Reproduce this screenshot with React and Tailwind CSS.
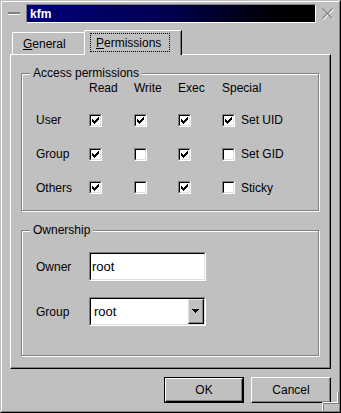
import React from 'react';

const CheckMark = () => (
  <svg width="7" height="7" viewBox="0 0 7 7" shapeRendering="crispEdges">
    <path
      fill="#000"
      d="M6 0h1v1h-1z M5 1h2v1h-2z M0 2h1v1h-1z M4 2h3v1h-3z M0 3h2v1h-2z M3 3h3v1h-3z M0 4h5v1h-5z M1 5h3v1h-3z M2 6h1v1h-1z"
    />
  </svg>
);

const Checkbox = ({ checked }) => (
  <div className="w-[13px] h-[13px] flex border border-t-[#808080] border-l-[#808080] border-r-white border-b-white">
    <div className="flex-1 flex items-center justify-center bg-white border border-t-black border-l-black border-r-[#dfdfdf] border-b-[#dfdfdf]">
      {checked && <CheckMark />}
    </div>
  </div>
);

const rows = [
  { label: 'User', perms: [true, true, true], special: 'Set UID', specialOn: true },
  { label: 'Group', perms: [true, false, true], special: 'Set GID', specialOn: false },
  { label: 'Others', perms: [true, false, true], special: 'Sticky', specialOn: false },
];

const Sunken = ({ children, className = '' }) => (
  <div className={`flex border border-t-[#808080] border-l-[#808080] border-r-white border-b-white ${className}`}>
    <div className="flex-1 flex items-center bg-white border border-t-black border-l-black border-r-[#dfdfdf] border-b-[#dfdfdf]">
      {children}
    </div>
  </div>
);

export default function App() {
  return (
    <div className="w-[341px] h-[413px] bg-[#c0c0c0] text-black text-[12px] leading-[14px] font-['Liberation_Sans',Arial,sans-serif] border border-t-[#c0c0c0] border-l-[#c0c0c0] border-r-black border-b-black">
      <div className="relative h-full flex flex-col border border-t-white border-l-white border-r-[#808080] border-b-[#808080]">
        {/* Title row */}
        <div className="h-[24px] flex items-start pt-[2px]">
          <div className="w-[24px] h-[19px] flex items-center justify-center">
            <div className="w-[12px] h-[3px] border-t-2 border-b border-t-[#808080] border-b-white" />
          </div>
          <div className="w-[290px] h-[19px] flex border border-t-[#808080] border-l-[#808080] border-r-white border-b-white">
            <div className="flex-1 flex items-center pl-[3px] bg-gradient-to-r from-[#00007c] via-[#000050] to-black">
              <span className="text-white font-bold text-[12px]">kfm</span>
            </div>
          </div>
          <div className="flex-1 h-[19px] flex items-center justify-center">
            <svg width="13" height="13" viewBox="0 0 13 13">
              <path d="M1.5 1.5 L11.5 11.5 M11.5 1.5 L1.5 11.5" stroke="#fff" strokeWidth="1.3" transform="translate(0.8 0.8)" />
              <path d="M1.5 1.5 L11.5 11.5 M11.5 1.5 L1.5 11.5" stroke="#808080" strokeWidth="1.3" />
            </svg>
          </div>
        </div>

        {/* Tabs */}
        <div className="h-[29px] -mb-[1px] flex items-start pl-[10px] relative z-10">
          <div className="mt-[6px] w-[72px] h-[22px] flex items-center pl-[10px] border-l border-t border-white rounded-tl-[2px]">
            <span><span className="underline">G</span>eneral</span>
          </div>
          <div className="mt-[4px] w-[98px] h-[25px] bg-[#c0c0c0] flex items-start pt-[2px] pl-[5px] border-l border-t border-r border-t-white border-l-white border-r-black shadow-[inset_-1px_0_0_#808080] rounded-tl-[2px]">
            <div className="w-[80px] h-[19px] flex items-center pl-[5px] border border-dotted border-black">
              <span><span className="underline">P</span>ermissions</span>
            </div>
          </div>
        </div>

        {/* Panel */}
        <div className="ml-[8px] w-[321px] h-[315px] flex flex-col px-[10px] border border-t-white border-l-white border-r-black border-b-black shadow-[inset_-1px_-1px_0_#808080]">
          <fieldset className="mt-[11px] w-[298px] border border-[#808080] shadow-[1px_1px_0_#fff,inset_1px_1px_0_#fff]">
            <legend className="ml-[8px] px-[3px] bg-[#c0c0c0]">Access permissions</legend>
            <div className="pl-[14px] pt-[1px] pb-[6px]">
              <div className="grid grid-cols-[53px_45px_44px_44px_1fr] h-[14px] items-center">
                <span />
                <span>Read</span>
                <span>Write</span>
                <span>Exec</span>
                <span>Special</span>
              </div>
              <div className="mt-[8px]">
                {rows.map((r, i) => (
                  <div
                    key={r.label}
                    className={`grid grid-cols-[53px_45px_44px_44px_1fr] items-center ${i === 2 ? 'h-[33px]' : 'h-[34px]'}`}
                  >
                    <span>{r.label}</span>
                    {r.perms.map((p, j) => (
                      <Checkbox key={j} checked={p} />
                    ))}
                    <div className="flex items-center gap-[6px]">
                      <Checkbox checked={r.specialOn} />
                      <span>{r.special}</span>
                    </div>
                  </div>
                ))}
              </div>
            </div>
          </fieldset>

          <fieldset className="mt-[12px] w-[298px] border border-[#808080] shadow-[1px_1px_0_#fff,inset_1px_1px_0_#fff]">
            <legend className="ml-[8px] px-[3px] bg-[#c0c0c0]">Ownership</legend>
            <div className="pl-[14px] pt-[15px] pb-[29px] flex flex-col gap-[16px]">
              <div className="flex items-center">
                <span className="w-[53px]">Owner</span>
                <Sunken className="w-[117px] h-[29px]">
                  <span className="pl-[1px] text-[13px]">root</span>
                </Sunken>
              </div>
              <div className="flex items-center">
                <span className="w-[53px]">Group</span>
                <Sunken className="w-[117px] h-[29px]">
                  <span className="flex-1 pl-[3px] text-[13px]">root</span>
                  <div className="w-[16px] h-full flex border border-t-[#dfdfdf] border-l-[#dfdfdf] border-r-black border-b-black bg-[#c0c0c0]">
                    <div className="flex-1 flex items-center justify-center border-r border-b border-[#808080]">
                      <svg width="7" height="4" viewBox="0 0 7 4" shapeRendering="crispEdges">
                        <path fill="#000" d="M0 0h7v1h-7z M1 1h5v1h-5z M2 2h3v1h-3z M3 3h1v1h-1z" />
                      </svg>
                    </div>
                  </div>
                </Sunken>
              </div>
            </div>
          </fieldset>
        </div>

        {/* Buttons */}
        <div className="mt-[8px] flex justify-end gap-[7px] pr-[8px]">
          <div className="w-[80px] h-[26px] flex border border-black">
            <div className="flex-1 flex items-center justify-center border border-t-white border-l-white border-r-black border-b-black shadow-[inset_-1px_-1px_0_#808080]">
              OK
            </div>
          </div>
          <div className="w-[80px] h-[26px] flex items-center justify-center border border-t-white border-l-white border-r-black border-b-black shadow-[inset_-1px_-1px_0_#808080]">
            Cancel
          </div>
        </div>

        {/* Size grip */}
        <svg className="absolute right-0 bottom-0" width="19" height="21" viewBox="0 0 19 21">
          <path d="M17.5 2 V12.5 H2.5 V21" fill="none" stroke="#fff" strokeWidth="1" />
          <path d="M18.5 2 V13.5 H3.5 V21" fill="none" stroke="#808080" strokeWidth="1" />
        </svg>
      </div>
    </div>
  );
}
